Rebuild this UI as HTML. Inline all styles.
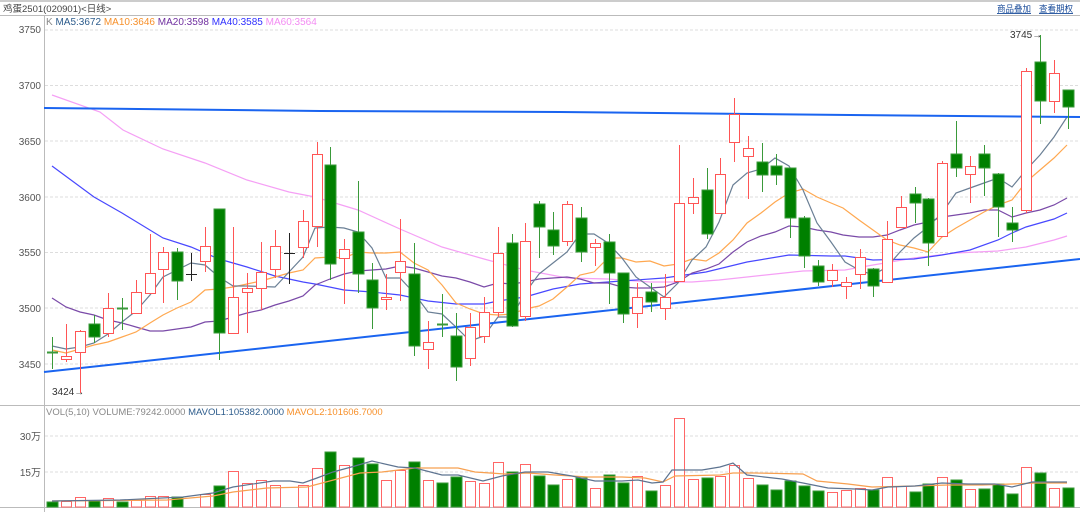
<!DOCTYPE html>
<html><head><meta charset="utf-8"><style>
html,body{margin:0;padding:0;background:#fff;width:1080px;height:512px;overflow:hidden}
svg{display:block;font-family:"Liberation Sans","Noto Sans CJK SC",sans-serif}
.r line,.r rect{stroke:#f55;stroke-width:1}
.r rect{fill:#fff}
.g line{stroke:#3a9a3a}
.g rect{fill:#008000;stroke:#3a9a3a}
.k line{stroke:#222}
.grid{stroke:#ddd;stroke-dasharray:3,2}
.ax{font-size:10px;fill:#555;text-anchor:end}
</style></head><body>
<svg width="1080" height="512" viewBox="0 0 1080 512" xmlns="http://www.w3.org/2000/svg">
<rect x="0" y="0" width="1080" height="2" fill="#ccc"/>
<text x="3" y="12" font-size="9.5" fill="#444">鸡蛋2501(020901)&lt;日线&gt;</text>
<text x="997" y="12" font-size="9" fill="#1a4c9a" text-decoration="underline" textLength="34" lengthAdjust="spacingAndGlyphs">商品叠加</text>
<text x="1039" y="12" font-size="9" fill="#1a4c9a" text-decoration="underline" textLength="34" lengthAdjust="spacingAndGlyphs">查看期权</text>
<line x1="0" y1="15.5" x2="1080" y2="15.5" stroke="#bbb"/>
<line x1="44.5" y1="16" x2="44.5" y2="512" stroke="#bbb"/>
<line x1="0" y1="405.5" x2="1080" y2="405.5" stroke="#bbb"/>
<line x1="0" y1="507.5" x2="1080" y2="507.5" stroke="#bbb"/>
<g class="grid">
<line x1="45" y1="30" x2="1080" y2="30"/><line x1="45" y1="85.5" x2="1080" y2="85.5"/><line x1="45" y1="141" x2="1080" y2="141"/><line x1="45" y1="197" x2="1080" y2="197"/><line x1="45" y1="252.5" x2="1080" y2="252.5"/><line x1="45" y1="308" x2="1080" y2="308"/><line x1="45" y1="364" x2="1080" y2="364"/>
<line x1="45" y1="436" x2="1080" y2="436"/><line x1="45" y1="472" x2="1080" y2="472"/>
</g>
<g class="ax">
<text x="41" y="33">3750</text><text x="41" y="89">3700</text><text x="41" y="145">3650</text><text x="41" y="201">3600</text><text x="41" y="256">3550</text><text x="41" y="312">3500</text><text x="41" y="368">3450</text>
<text x="41" y="440">30万</text><text x="41" y="476">15万</text>
</g>
<text x="46" y="25" font-size="10"><tspan fill="#888">K </tspan><tspan fill="#2d5c8c"> MA5:3672 </tspan><tspan fill="#f7902a">MA10:3646 </tspan><tspan fill="#7030a0">MA20:3598 </tspan><tspan fill="#3030ff">MA40:3585 </tspan><tspan fill="#f38cf3">MA60:3564</tspan></text>
<text x="46" y="415" font-size="9.5"><tspan fill="#888">VOL(5,10) VOLUME:79242.0000 </tspan><tspan fill="#2d5c8c">MAVOL1:105382.0000 </tspan><tspan fill="#f7902a">MAVOL2:101606.7000</tspan></text>
<text x="52" y="395" font-size="10" fill="#333">3424→</text>
<text x="1010" y="38" font-size="10" fill="#333">3745→</text>

<polyline fill="none" stroke="#f5a0f5" stroke-width="1.2" points="52,95 100,112 123,130 163,149 205,163 247,180 289,192 315,197 358,210 400,229 442,247 484,259 525,270 567,278 608,279 650,282 692,282 719,280 747,277 775,274 803,271 845,270 873,265 914,258 956,253 998,251 1026,247 1054,240 1067,236"/>
<polyline fill="none" stroke="#4848ff" stroke-width="1.2" points="52,166 94,197 122,213 163,238 191,247 219,259 247,267 275,276 303,282 315,284 344,290 372,292 400,295 428,301 456,304 484,304 498,301 525,297 553,289 580,284 622,281 664,278 706,272 747,262 789,255 831,256 845,256 873,260 914,259 942,255 970,250 998,240 1012,233 1026,227 1054,219 1067,213"/>
<polyline fill="none" stroke="#7a4aa8" stroke-width="1.2" points="52,298 66,307 80,312 94,315 108,320 122,323 136,327 150,331 163,331 177,329 191,327 205,322 219,321 233,317 247,313 261,310 275,305 289,301 303,296 315,285 330,279 344,274 358,271 372,270 386,269 400,266 414,268 428,272 442,276 456,278 470,282 484,287 498,283 512,284 525,282 539,279 553,278 567,277 580,279 594,283 608,283 622,287 636,288 650,288 664,287 678,282 692,273 706,269 719,264 733,252 747,242 761,236 775,232 789,226 803,227 817,230 831,232 843,235 859,237 873,237 887,235 900,230 914,225 928,222 942,217 956,215 970,213 984,210 998,210 1012,217 1026,213 1040,210 1054,205 1067,198"/>
<polyline fill="none" stroke="#ffa850" stroke-width="1.2" points="52,350 66,353 80,349 94,345 108,342 122,337 136,332 150,323 163,315 177,308 191,302 205,290 219,289 233,287 247,284 261,281 275,277 289,273 303,270 315,258 330,257 344,258 358,252 372,253 386,253 400,252 414,263 428,270 442,285 456,303 470,309 484,314 498,315 512,314 525,309 539,306 553,299 567,287 580,275 594,272 608,258 622,258 636,262 650,261 664,266 678,264 692,259 706,261 719,253 733,240 747,223 761,213 775,202 789,193 803,189 817,197 831,203 843,208 859,220 873,230 887,240 900,245 914,248 928,252 942,237 956,228 970,220 984,212 998,205 1012,200 1026,182 1040,170 1054,158 1067,145"/>
<polyline fill="none" stroke="#6a7f95" stroke-width="1.2" points="52,346 66,349 80,347 94,343 108,334 122,322 136,311 150,295 163,277 177,270 191,263 205,265 219,277 233,286 247,286 275,287 289,272 303,257 315,228 330,227 344,228 358,232 372,248 386,278 400,278 414,293 428,312 442,314 456,327 470,341 484,336 498,317 512,317 525,293 539,274 553,263 567,252 580,234 594,234 608,243 622,258 636,277 650,287 664,297 678,283 692,260 706,247 719,222 733,185 747,173 761,169 775,158 789,166 803,190 817,223 831,242 845,262 859,270 873,275 887,267 900,252 914,238 928,227 942,213 956,193 970,188 984,183 998,178 1012,187 1026,170 1040,155 1054,137 1067,117"/>
<polyline fill="none" stroke="#1a64f0" stroke-width="2" points="44,108 320,111 560,112 850,115 1080,117"/>
<line x1="44" y1="372" x2="1080" y2="259" stroke="#1a64f0" stroke-width="2"/>

<g class="g"><line x1="52.5" y1="337" x2="52.5" y2="369"/><line x1="47" y1="352.5" x2="58" y2="352.5" stroke-width="2"/></g>
<g class="r"><line x1="66.5" y1="324" x2="66.5" y2="362"/><rect x="61.5" y="356.5" width="10" height="3"/></g>
<g class="r"><line x1="80.5" y1="330" x2="80.5" y2="393"/><rect x="75.5" y="331.5" width="10" height="21"/></g>
<g class="g"><line x1="94.5" y1="315" x2="94.5" y2="343"/><rect x="89" y="324" width="11" height="13"/></g>
<g class="r"><line x1="108.5" y1="293" x2="108.5" y2="337"/><rect x="103.5" y="308.5" width="10" height="25"/></g>
<g class="g"><line x1="122.5" y1="298" x2="122.5" y2="330"/><line x1="117" y1="308.5" x2="128" y2="308.5" stroke-width="2"/></g>
<g class="r"><line x1="136.5" y1="280" x2="136.5" y2="313"/><rect x="131.5" y="292.5" width="10" height="21"/></g>
<g class="r"><line x1="150.5" y1="234" x2="150.5" y2="293"/><rect x="145.5" y="273.5" width="10" height="20"/></g>
<g class="r"><line x1="163.5" y1="247" x2="163.5" y2="303"/><rect x="158.5" y="252.5" width="10" height="17"/></g>
<g class="g"><line x1="177.5" y1="248" x2="177.5" y2="300"/><rect x="172" y="252" width="11" height="29"/></g>
<g class="k"><line x1="191.5" y1="253" x2="191.5" y2="281"/><line x1="186" y1="274.5" x2="197" y2="274.5"/></g>
<g class="r"><line x1="205.5" y1="227" x2="205.5" y2="272"/><rect x="200.5" y="246.5" width="10" height="15"/></g>
<g class="g"><line x1="219.5" y1="209" x2="219.5" y2="360"/><rect x="214" y="209" width="11" height="124"/></g>
<g class="r"><line x1="233.5" y1="227" x2="233.5" y2="333"/><rect x="228.5" y="297.5" width="10" height="36"/></g>
<g class="r"><line x1="247.5" y1="273" x2="247.5" y2="333"/><rect x="242.5" y="288.5" width="10" height="4"/></g>
<g class="r"><line x1="261.5" y1="242" x2="261.5" y2="310"/><rect x="256.5" y="272.5" width="10" height="16"/></g>
<g class="r"><line x1="275.5" y1="230" x2="275.5" y2="278"/><rect x="270.5" y="246.5" width="10" height="23"/></g>
<g class="k"><line x1="289.5" y1="233" x2="289.5" y2="284"/><line x1="284" y1="253.5" x2="295" y2="253.5"/></g>
<g class="r"><line x1="303.5" y1="210" x2="303.5" y2="258"/><rect x="298.5" y="221.5" width="10" height="26"/></g>
<g class="r"><line x1="317.5" y1="142" x2="317.5" y2="247"/><rect x="312.5" y="154.5" width="10" height="72"/></g>
<g class="g"><line x1="330.5" y1="147" x2="330.5" y2="280"/><rect x="325" y="165" width="11" height="99"/></g>
<g class="r"><line x1="344.5" y1="239" x2="344.5" y2="304"/><rect x="339.5" y="249.5" width="10" height="9"/></g>
<g class="g"><line x1="358.5" y1="181" x2="358.5" y2="293"/><rect x="353" y="232" width="11" height="42"/></g>
<g class="g"><line x1="372.5" y1="263" x2="372.5" y2="329"/><rect x="367" y="280" width="11" height="28"/></g>
<g class="r"><line x1="386.5" y1="274" x2="386.5" y2="310"/><rect x="381.5" y="297.5" width="10" height="2"/></g>
<g class="r"><line x1="400.5" y1="219" x2="400.5" y2="301"/><rect x="395.5" y="261.5" width="10" height="11"/></g>
<g class="g"><line x1="414.5" y1="243" x2="414.5" y2="356"/><rect x="409" y="274" width="11" height="72"/></g>
<g class="r"><line x1="428.5" y1="321" x2="428.5" y2="369"/><rect x="423.5" y="342.5" width="10" height="7"/></g>
<g class="g"><line x1="442.5" y1="294" x2="442.5" y2="337"/><line x1="437" y1="324.5" x2="448" y2="324.5" stroke-width="2"/></g>
<g class="g"><line x1="456.5" y1="313" x2="456.5" y2="381"/><rect x="451" y="336" width="11" height="31"/></g>
<g class="r"><line x1="470.5" y1="313" x2="470.5" y2="366"/><rect x="465.5" y="327.5" width="10" height="31"/></g>
<g class="r"><line x1="484.5" y1="297" x2="484.5" y2="343"/><rect x="479.5" y="312.5" width="10" height="24"/></g>
<g class="r"><line x1="498.5" y1="227" x2="498.5" y2="317"/><rect x="493.5" y="253.5" width="10" height="59"/></g>
<g class="g"><line x1="512.5" y1="234" x2="512.5" y2="327"/><rect x="507" y="243" width="11" height="83"/></g>
<g class="r"><line x1="525.5" y1="223" x2="525.5" y2="321"/><rect x="520.5" y="241.5" width="10" height="75"/></g>
<g class="g"><line x1="539.5" y1="201" x2="539.5" y2="258"/><rect x="534" y="204" width="11" height="23"/></g>
<g class="g"><line x1="553.5" y1="212" x2="553.5" y2="255"/><rect x="548" y="230" width="11" height="16"/></g>
<g class="r"><line x1="567.5" y1="201" x2="567.5" y2="246"/><rect x="562.5" y="204.5" width="10" height="37"/></g>
<g class="g"><line x1="581.5" y1="207" x2="581.5" y2="262"/><rect x="576" y="218" width="11" height="34"/></g>
<g class="r"><line x1="595.5" y1="239" x2="595.5" y2="266"/><rect x="590.5" y="243.5" width="10" height="4"/></g>
<g class="g"><line x1="609.5" y1="234" x2="609.5" y2="304"/><rect x="604" y="242" width="11" height="31"/></g>
<g class="g"><line x1="623.5" y1="273" x2="623.5" y2="323"/><rect x="618" y="273" width="11" height="41"/></g>
<g class="r"><line x1="637.5" y1="283" x2="637.5" y2="328"/><rect x="632.5" y="297.5" width="10" height="16"/></g>
<g class="g"><line x1="651.5" y1="283" x2="651.5" y2="312"/><rect x="646" y="292" width="11" height="10"/></g>
<g class="r"><line x1="665.5" y1="274" x2="665.5" y2="320"/><rect x="660.5" y="297.5" width="10" height="11"/></g>
<g class="r"><line x1="679.5" y1="145" x2="679.5" y2="281"/><rect x="674.5" y="203.5" width="10" height="78"/></g>
<g class="r"><line x1="693.5" y1="178" x2="693.5" y2="214"/><rect x="688.5" y="197.5" width="10" height="6"/></g>
<g class="g"><line x1="707.5" y1="168" x2="707.5" y2="239"/><rect x="702" y="190" width="11" height="44"/></g>
<g class="r"><line x1="720.5" y1="158" x2="720.5" y2="213"/><rect x="715.5" y="174.5" width="10" height="39"/></g>
<g class="r"><line x1="734.5" y1="98" x2="734.5" y2="162"/><rect x="729.5" y="114.5" width="10" height="28"/></g>
<g class="r"><line x1="748.5" y1="136" x2="748.5" y2="199"/><rect x="743.5" y="148.5" width="10" height="8"/></g>
<g class="g"><line x1="762.5" y1="143" x2="762.5" y2="192"/><rect x="757" y="162" width="11" height="13"/></g>
<g class="g"><line x1="776.5" y1="154" x2="776.5" y2="185"/><rect x="771" y="166" width="11" height="9"/></g>
<g class="g"><line x1="790.5" y1="168" x2="790.5" y2="238"/><rect x="785" y="168" width="11" height="50"/></g>
<g class="g"><line x1="804.5" y1="216" x2="804.5" y2="268"/><rect x="799" y="218" width="11" height="38"/></g>
<g class="g"><line x1="818.5" y1="260" x2="818.5" y2="286"/><rect x="813" y="266" width="11" height="16"/></g>
<g class="r"><line x1="832.5" y1="264" x2="832.5" y2="287"/><rect x="827.5" y="270.5" width="10" height="10"/></g>
<g class="r"><line x1="846.5" y1="277" x2="846.5" y2="299"/><rect x="841.5" y="282.5" width="10" height="4"/></g>
<g class="r"><line x1="860.5" y1="249" x2="860.5" y2="289"/><rect x="855.5" y="257.5" width="10" height="17"/></g>
<g class="g"><line x1="873.5" y1="268" x2="873.5" y2="297"/><rect x="868" y="269" width="11" height="17"/></g>
<g class="r"><line x1="887.5" y1="221" x2="887.5" y2="282"/><rect x="882.5" y="239.5" width="10" height="43"/></g>
<g class="r"><line x1="901.5" y1="196" x2="901.5" y2="227"/><rect x="896.5" y="207.5" width="10" height="20"/></g>
<g class="g"><line x1="915.5" y1="187" x2="915.5" y2="223"/><rect x="910" y="194" width="11" height="9"/></g>
<g class="g"><line x1="928.5" y1="198" x2="928.5" y2="266"/><rect x="923" y="199" width="11" height="44"/></g>
<g class="r"><line x1="942.5" y1="161" x2="942.5" y2="236"/><rect x="937.5" y="163.5" width="10" height="73"/></g>
<g class="g"><line x1="956.5" y1="121" x2="956.5" y2="177"/><rect x="951" y="154" width="11" height="14"/></g>
<g class="r"><line x1="970.5" y1="156" x2="970.5" y2="203"/><rect x="965.5" y="166.5" width="10" height="8"/></g>
<g class="g"><line x1="984.5" y1="145" x2="984.5" y2="196"/><rect x="979" y="154" width="11" height="14"/></g>
<g class="g"><line x1="998.5" y1="173" x2="998.5" y2="237"/><rect x="993" y="174" width="11" height="33"/></g>
<g class="g"><line x1="1012.5" y1="207" x2="1012.5" y2="242"/><rect x="1007" y="223" width="11" height="7"/></g>
<g class="r"><line x1="1026.5" y1="68" x2="1026.5" y2="213"/><rect x="1021.5" y="71.5" width="10" height="139"/></g>
<g class="g"><line x1="1040.5" y1="35" x2="1040.5" y2="124"/><rect x="1035" y="62" width="11" height="39"/></g>
<g class="r"><line x1="1054.5" y1="60" x2="1054.5" y2="113"/><rect x="1049.5" y="73.5" width="10" height="28"/></g>
<g class="g"><line x1="1068.5" y1="90" x2="1068.5" y2="129"/><rect x="1063" y="90" width="11" height="17"/></g>

<g fill="#008000" stroke="#3a9a3a">
<rect x="47" y="502" width="11" height="5"/><rect x="89" y="501" width="11" height="6"/><rect x="117" y="502" width="11" height="5"/><rect x="172" y="497" width="11" height="10"/><rect x="214" y="486" width="11" height="21"/><rect x="325" y="452" width="11" height="55"/><rect x="353" y="458" width="11" height="49"/><rect x="367" y="464" width="11" height="43"/><rect x="409" y="462" width="11" height="45"/><rect x="437" y="483" width="11" height="24"/><rect x="451" y="477" width="11" height="30"/><rect x="507" y="472" width="11" height="35"/><rect x="534" y="476" width="11" height="31"/><rect x="548" y="485" width="11" height="22"/><rect x="576" y="478" width="11" height="29"/><rect x="604" y="475" width="11" height="32"/><rect x="618" y="483" width="11" height="24"/><rect x="646" y="491" width="11" height="16"/><rect x="702" y="478" width="11" height="29"/><rect x="757" y="485" width="11" height="22"/><rect x="771" y="490" width="11" height="17"/><rect x="785" y="481" width="11" height="26"/><rect x="799" y="486" width="11" height="21"/><rect x="813" y="491" width="11" height="16"/><rect x="868" y="490" width="11" height="17"/><rect x="910" y="492" width="11" height="15"/><rect x="923" y="484" width="11" height="23"/><rect x="951" y="480" width="11" height="27"/><rect x="979" y="489" width="11" height="18"/><rect x="993" y="484" width="11" height="23"/><rect x="1007" y="494" width="11" height="13"/><rect x="1035" y="473" width="11" height="34"/><rect x="1063" y="488" width="11" height="19"/>
</g>
<g fill="#fff" stroke="#f66">
<rect x="61.5" y="501.5" width="10" height="5.5"/><rect x="75.5" y="497.5" width="10" height="9.5"/><rect x="103.5" y="498.5" width="10" height="8.5"/><rect x="131.5" y="500.5" width="10" height="6.5"/><rect x="145.5" y="496.5" width="10" height="10.5"/><rect x="158.5" y="496.5" width="10" height="10.5"/><rect x="200.5" y="494.5" width="10" height="12.5"/><rect x="228.5" y="471.5" width="10" height="35.5"/><rect x="242.5" y="483.5" width="10" height="23.5"/><rect x="256.5" y="480.5" width="10" height="26.5"/><rect x="270.5" y="485.5" width="10" height="21.5"/><rect x="298.5" y="485.5" width="10" height="21.5"/><rect x="312.5" y="468.5" width="10" height="38.5"/><rect x="339.5" y="465.5" width="10" height="41.5"/><rect x="381.5" y="480.5" width="10" height="26.5"/><rect x="395.5" y="470.5" width="10" height="36.5"/><rect x="423.5" y="480.5" width="10" height="26.5"/><rect x="465.5" y="481.5" width="10" height="25.5"/><rect x="479.5" y="483.5" width="10" height="23.5"/><rect x="493.5" y="462.5" width="10" height="44.5"/><rect x="520.5" y="464.5" width="10" height="42.5"/><rect x="562.5" y="479.5" width="10" height="27.5"/><rect x="590.5" y="488.5" width="10" height="18.5"/><rect x="632.5" y="476.5" width="10" height="30.5"/><rect x="660.5" y="485.5" width="10" height="21.5"/><rect x="674.5" y="418.5" width="10" height="88.5"/><rect x="688.5" y="479.5" width="10" height="27.5"/><rect x="715.5" y="476.5" width="10" height="30.5"/><rect x="729.5" y="465.5" width="10" height="41.5"/><rect x="743.5" y="478.5" width="10" height="28.5"/><rect x="827.5" y="492.5" width="10" height="14.5"/><rect x="841.5" y="490.5" width="10" height="16.5"/><rect x="855.5" y="488.5" width="10" height="18.5"/><rect x="882.5" y="477.5" width="10" height="29.5"/><rect x="896.5" y="486.5" width="10" height="20.5"/><rect x="937.5" y="477.5" width="10" height="29.5"/><rect x="965.5" y="489.5" width="10" height="17.5"/><rect x="1021.5" y="467.5" width="10" height="39.5"/><rect x="1049.5" y="488.5" width="10" height="18.5"/>
</g>
<polyline fill="none" stroke="#f7a050" stroke-width="1.2" points="52,501 167,500 213,496 233,492 267,488 307,487 360,473 382,472 415,468 458,468 475,472 505,474 528,473 555,475 588,477 622,477 645,478 663,482 675,476 720,475 733,473 755,473 803,474 817,481 848,484 872,487 915,486 948,485 982,485 1012,484 1035,483 1067,483"/>
<polyline fill="none" stroke="#5d7390" stroke-width="1.2" points="52,501 120,500 183,497 213,493 233,487 273,481 290,481 303,483 317,478 333,472 355,466 372,461 398,467 415,468 442,475 458,475 483,481 502,476 525,472 548,472 572,476 595,481 622,481 638,480 652,483 663,482 672,470 702,470 720,467 733,463 747,475 782,479 803,483 828,488 855,489 872,490 888,487 915,486 942,483 968,484 995,484 1012,487 1032,482 1067,482"/>
</svg>
</body></html>
